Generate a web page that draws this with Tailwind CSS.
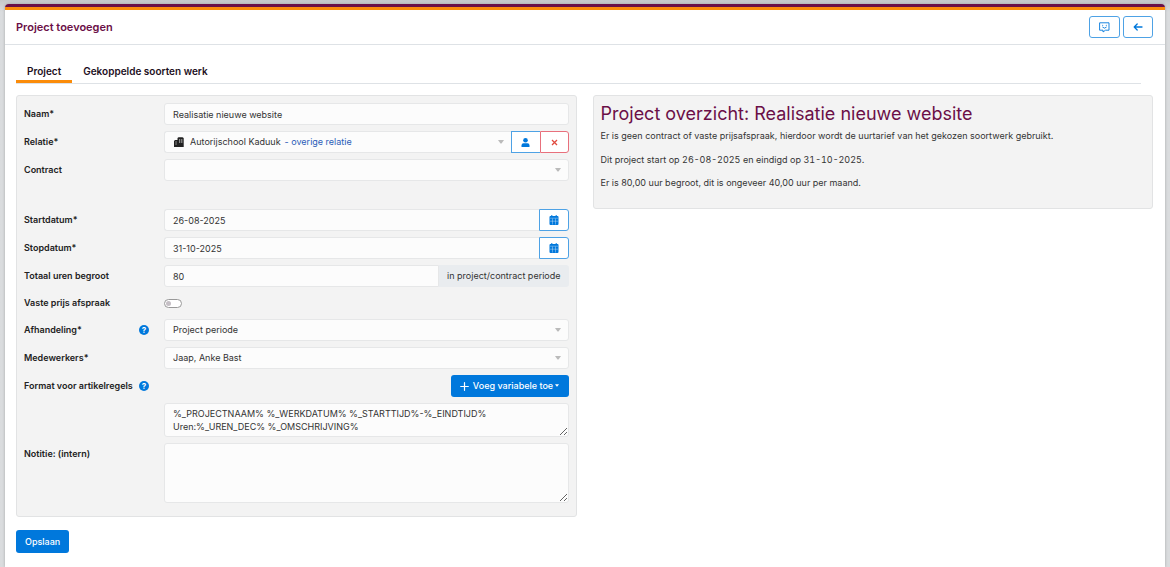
<!DOCTYPE html>
<html lang="nl">
<head>
<meta charset="utf-8">
<meta name="viewport" content="width=device-width, initial-scale=1">
<title>Project toevoegen</title>
<script src="https://cdn.jsdelivr.net/npm/@tailwindcss/browser@4"></script>
</head>
<body class="min-h-screen flex flex-col bg-[#dadcde] bg-linear-to-b from-[#c6c8c9] to-[#dadcde] to-[12px] px-[5px] pt-1 font-['Inter',sans-serif] text-[9px] leading-3 text-[#333]">
<svg class="hidden">
  <symbol id="calendar" viewBox="0 0 10 10"><path fill="currentColor" d="M2.300 0h1v1h3.400V0h1v1H8.500Q9.500 1 9.500 2v7Q9.500 10 8.500 10h-7Q.5 10 .5 9V2Q.5 1 1.500 1h.8Z"/><path stroke="#fff" stroke-opacity=".7" stroke-width=".5" d="M1 3.200h8M1 6.200h8M3.500 3.500v6M6.500 3.500v6"/></symbol>
  <symbol id="caret" viewBox="0 0 6 4"><path fill="currentColor" d="M0 0h6L3.500 3.500h-1Z"/></symbol>
</svg>
<main class="grow bg-white border-t-3 border-[#6b0f47] rounded-t-sm shadow-[0_0_3px_rgba(0,0,0,0.25)]">
  <header class="flex items-center justify-between border-t-3 border-t-[#fb8c0a] border-b border-b-[#dee2e6] pl-[11px] pr-3 h-[38px]">
    <h1 class="text-[11px] leading-4 font-semibold text-[#6b0f47]">Project toevoegen</h1>
    <div class="flex gap-[3px]">
      <button type="button" aria-label="Feedback" class="flex items-center justify-center w-[31px] h-[22px] rounded-[3px] border border-[#4ea2e5] text-[#0078dc] bg-white">
        <svg class="size-[11px]" viewBox="0 0 11 11" fill="none" stroke="currentColor" stroke-width=".9" stroke-linejoin="round" stroke-linecap="round"><path d="M1 .8h9v7.400H6.500L4 10V8.200H1ZM3.700 5.300Q5.500 7.300 7.300 5.300"/><path stroke-width="1.100" d="M3.700 3.200v.1M7.300 3.200v.1"/></svg>
      </button>
      <button type="button" aria-label="Terug" class="flex items-center justify-center w-[30px] h-[22px] rounded-[3px] border border-[#4ea2e5] text-[#0078dc] bg-white">
        <svg class="size-[10px]" viewBox="0 0 10 10" fill="none" stroke="currentColor" stroke-width="1.300" stroke-linejoin="round" stroke-linecap="round"><path d="M9 5H1.200M4.200 2 1.200 5l3 3"/></svg>
      </button>
    </div>
  </header>
  <nav class="ml-[11px] mr-6 mt-[14px] flex border-b border-[#dee2e6] text-[10px] text-[#1d0f1d] font-semibold">
    <a href="#project" class="-mb-px px-[11px] h-6 pt-[6px] border-b-3 border-[#fb8c0a]">Project</a>
    <a href="#soorten" class="px-[11px] h-6 pt-[6px]">Gekoppelde soorten werk</a>
  </nav>
  <form class="pl-[11px] pr-3 mt-[11px]">
    <div class="grid grid-cols-2 gap-4 items-start">
      <section class="rounded-[3px] border border-[#e2e3e4] bg-[#f3f3f3] px-[7px] pt-[7px] pb-[13px] flex flex-col gap-[6px]">
        <div class="flex items-center">
          <label for="naam" class="w-[140px] shrink-0 font-semibold text-[#222]">Naam*</label>
          <input id="naam" value="Realisatie nieuwe website" class="grow min-w-0 h-[22px] px-2 rounded-[3px] border border-[#e6e7e8] bg-[#fcfcfc]">
        </div>
        <div class="flex items-center">
          <label for="relatie" class="w-[140px] shrink-0 font-semibold text-[#222]">Relatie*</label>
          <button type="button" id="relatie" role="combobox" aria-expanded="false" class="grow min-w-0 h-[22px] pl-[9px] pr-[7px] rounded-l-[3px] border border-r-0 border-[#e6e7e8] bg-[#fcfcfc] flex items-center text-left">
            <svg class="size-[10px] mr-[6px]" viewBox="0 0 10 10"><path fill="#222" d="M0 10V4l1-1h2.500V1L4.500.3h4L9.700 1v9Z"/><path stroke="#fff" stroke-opacity=".75" stroke-width=".8" d="M1.300 5h1.500M1.300 7h1.500M5.700 2v4M7.800 2v4"/></svg>
            <span>Autorijschool Kaduuk</span><span class="ml-1 text-[#2a5db8]">- overige relatie</span>
            <svg class="ml-auto w-[6px] h-1 text-[#bbb]"><use href="#caret"/></svg>
          </button>
          <button type="button" aria-label="Relatie bekijken" class="w-[29px] h-[22px] shrink-0 border border-r-0 border-[#4ea2e5] bg-white text-[#0078dc] flex items-center justify-center">
            <svg class="size-[9px]" viewBox="0 0 9 9" fill="currentColor"><circle cx="4.500" cy="2.300" r="2.300"/><path d="M.5 9V7.500Q.5 5.300 2.500 5.300h4Q8.500 5.300 8.500 7.500V9Z"/></svg>
          </button>
          <button type="button" aria-label="Relatie wissen" class="w-[29px] h-[22px] shrink-0 rounded-r-[3px] border border-[#e8707c] bg-white text-[#e04a3f] flex items-center justify-center">
            <svg class="size-[7px]" viewBox="0 0 7 7" stroke="currentColor" stroke-width="1.300"><path d="m1 1 5 5M6 1 1 6"/></svg>
          </button>
        </div>
        <div class="flex items-center mb-[22px]">
          <label for="contract" class="w-[140px] shrink-0 font-semibold text-[#222]">Contract</label>
          <div class="grow relative flex">
            <select id="contract" class="appearance-none w-full h-[22px] px-2 rounded-[3px] border border-[#e6e7e8] bg-[#fcfcfc]"><option></option></select>
            <svg class="absolute right-2 top-[9px] w-[6px] h-1 text-[#bbb] pointer-events-none"><use href="#caret"/></svg>
          </div>
        </div>
        <div class="flex items-center">
          <label for="start" class="w-[140px] shrink-0 font-semibold text-[#222]">Startdatum*</label>
          <input id="start" value="26-08-2025" class="grow min-w-0 h-[22px] px-2 rounded-l-[3px] border border-r-0 border-[#e6e7e8] bg-[#fcfcfc]">
          <button type="button" aria-label="Kies startdatum" class="w-[30px] h-[22px] shrink-0 rounded-r-[3px] border border-[#4ea2e5] bg-white text-[#0078dc] flex items-center justify-center"><svg class="size-[10px]"><use href="#calendar"/></svg></button>
        </div>
        <div class="flex items-center">
          <label for="stop" class="w-[140px] shrink-0 font-semibold text-[#222]">Stopdatum*</label>
          <input id="stop" value="31-10-2025" class="grow min-w-0 h-[22px] px-2 rounded-l-[3px] border border-r-0 border-[#e6e7e8] bg-[#fcfcfc]">
          <button type="button" aria-label="Kies stopdatum" class="w-[30px] h-[22px] shrink-0 rounded-r-[3px] border border-[#4ea2e5] bg-white text-[#0078dc] flex items-center justify-center"><svg class="size-[10px]"><use href="#calendar"/></svg></button>
        </div>
        <div class="flex items-center">
          <label for="uren" class="w-[140px] shrink-0 font-semibold text-[#222]">Totaal uren begroot</label>
          <input id="uren" value="80" class="grow min-w-0 h-[22px] px-2 rounded-l-[3px] border border-[#e6e7e8] bg-[#fcfcfc]">
          <span class="shrink-0 h-[22px] px-2 rounded-r-[3px] bg-[#e9ecef] flex items-center">in project/contract periode</span>
        </div>
        <div class="flex items-center h-5">
          <label for="vast" class="w-[140px] shrink-0 font-semibold text-[#222]">Vaste prijs afspraak</label>
          <input id="vast" type="checkbox" role="switch" class="appearance-none w-[18px] h-[9px] rounded-full border border-[#999] bg-white flex items-center pl-px before:content-[''] before:size-[5px] before:rounded-full before:bg-[#c5bfc5]">
        </div>
        <div class="flex items-center">
          <div class="w-[140px] shrink-0 pr-[15px] flex items-center justify-between"><label for="afh" class="font-semibold text-[#222]">Afhandeling*</label><button type="button" aria-label="Uitleg afhandeling" class="size-[10px] rounded-full bg-[#0078dc] text-white text-[8px] leading-[10px] font-bold">?</button></div>
          <div class="grow relative flex">
            <select id="afh" class="appearance-none w-full h-[22px] px-2 rounded-[3px] border border-[#e6e7e8] bg-[#fcfcfc]"><option>Project periode</option></select>
            <svg class="absolute right-2 top-[9px] w-[6px] h-1 text-[#bbb] pointer-events-none"><use href="#caret"/></svg>
          </div>
        </div>
        <div class="flex items-center">
          <label for="mede" class="w-[140px] shrink-0 font-semibold text-[#222]">Medewerkers*</label>
          <div class="grow relative flex">
            <select id="mede" class="appearance-none w-full h-[22px] px-2 rounded-[3px] border border-[#e6e7e8] bg-[#fcfcfc]"><option>Jaap, Anke Bast</option></select>
            <svg class="absolute right-2 top-[9px] w-[6px] h-1 text-[#bbb] pointer-events-none"><use href="#caret"/></svg>
          </div>
        </div>
        <div class="flex items-center justify-between">
          <div class="w-[140px] shrink-0 pr-[15px] flex items-center justify-between whitespace-nowrap"><label for="format" class="font-semibold text-[#222]">Format voor artikelregels</label><button type="button" aria-label="Uitleg format" class="size-[10px] rounded-full bg-[#0078dc] text-white text-[8px] leading-[10px] font-bold">?</button></div>
          <button type="button" class="h-[22px] w-[118px] rounded-[3px] bg-[#0078dc] text-white font-medium flex items-center justify-center">
            <svg class="size-[9px] mr-1" viewBox="0 0 9 9" stroke="currentColor" stroke-width="1.200" stroke-linecap="round"><path d="M4.500.7v7.600M.7 4.500h7.600"/></svg>Voeg variabele toe<svg class="ml-[2px] mb-px w-1 h-[3px]"><use href="#caret"/></svg>
          </button>
        </div>
        <textarea id="format" class="ml-[140px] h-[34px] px-2 py-[3px] leading-[13px] rounded-[3px] border border-[#e6e7e8] bg-[#fcfcfc] resize-y overflow-hidden">%_PROJECTNAAM% %_WERKDATUM% %_STARTTIJD%-%_EINDTIJD%
Uren:%_UREN_DEC% %_OMSCHRIJVING%</textarea>
        <div class="flex items-start">
          <label for="notitie" class="w-[140px] shrink-0 pt-[5px] font-semibold text-[#222]">Notitie: (intern)</label>
          <textarea id="notitie" class="grow min-w-0 h-[60px] px-2 py-[3px] leading-[13px] rounded-[3px] border border-[#e6e7e8] bg-[#fcfcfc] resize-y"></textarea>
        </div>
      </section>
      <section class="rounded-[3px] border border-[#e2e3e4] bg-[#f3f3f3] px-[7px] pt-[6px] pb-[19px]">
        <h2 class="text-[18px] leading-6 text-[#6b0f47]">Project overzicht: Realisatie nieuwe website</h2>
        <p class="mt-1">Er is geen contract of vaste prijsafspraak, hierdoor wordt de uurtarief van het gekozen soortwerk gebruikt.</p>
        <p class="mt-3">Dit project start op <time class="tabular-nums" datetime="2025-08-26">26-08-2025</time> en eindigd op <time class="tabular-nums" datetime="2025-10-31">31-10-2025</time>.</p>
        <p class="mt-[11px]">Er is 80,00 uur begroot, dit is ongeveer 40,00 uur per maand.</p>
      </section>
    </div>
    <button type="submit" class="mt-[13px] h-[23px] px-[9px] rounded-[3px] bg-[#0078dc] text-white font-medium">Opslaan</button>
  </form>
</main>
</body>
</html>
